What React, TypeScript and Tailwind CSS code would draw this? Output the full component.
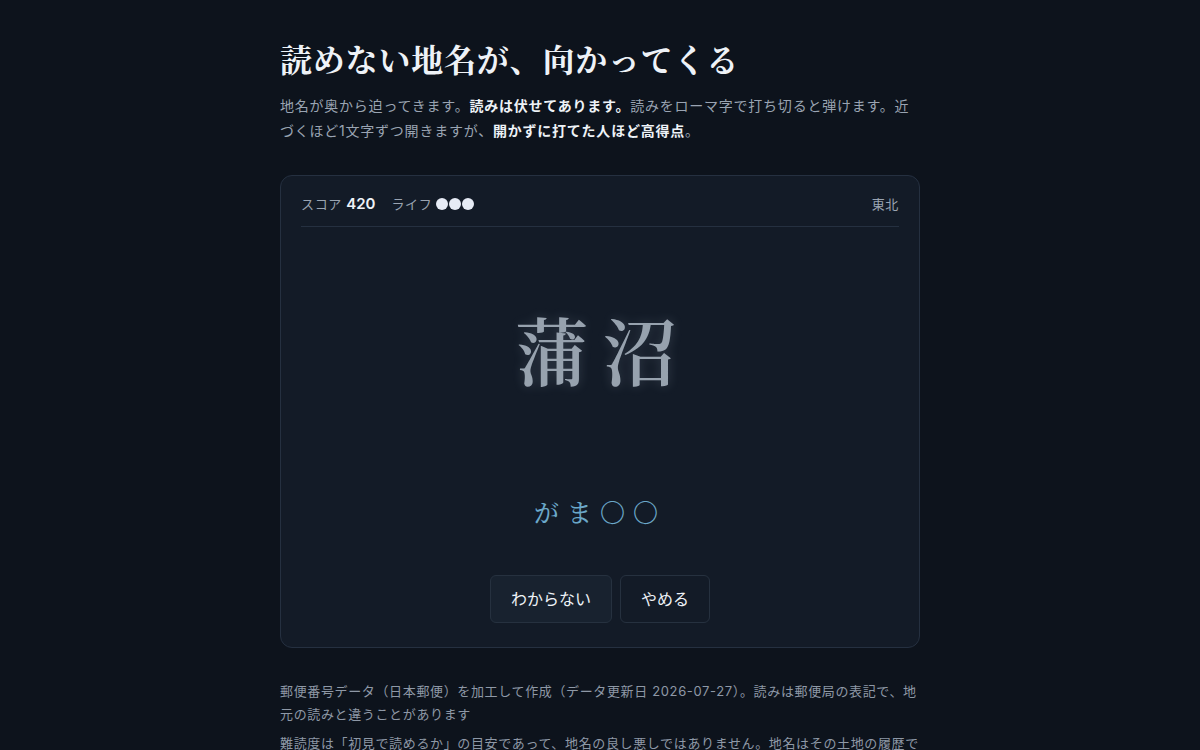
const sans = "font-['Inter','Noto_Sans_CJK_JP',sans-serif]";
const serif = "font-['Noto_Serif_CJK_JP','Noto_Serif_JP','IPAMincho','Liberation_Serif',serif]";

export default function App() {
  return (
    <div className={`min-h-screen bg-[#0d131c] text-[#e6ebf2] tracking-[0.04em] ${sans}`}>
      <main className="mx-auto w-[640px] pt-[37px] pb-16">
        <h1 className={`${serif} text-[32px] font-bold leading-[42px] tracking-[0.025em] text-[#eef2f7]`}>
          読めない地名が、向かってくる
        </h1>
        <p className="mt-[14px] text-[14px] leading-[25px] tracking-[0.055em] text-[#9aa4b2]">
          地名が奥から迫ってきます。<b className="font-bold text-[#eef2f7]">読みは伏せてあります。</b>
          読みをローマ字で打ち切ると弾けます。近づくほど1文字ずつ開きますが、
          <b className="font-bold text-[#eef2f7]">開かずに打てた人ほど高得点</b>。
        </p>

        {/* Game board */}
        <section className="mt-8 rounded-xl border border-[#253040] bg-[#131b27] px-5 pt-[18px] pb-6">
          <div className="flex items-center justify-between border-b border-[#253040] pb-3 text-[13px] leading-5">
            <div className="flex items-center gap-4 text-[#9aa4b2]">
              <span>
                スコア <span className="text-[15px] font-semibold tracking-normal text-[#eef2f7]">420</span>
              </span>
              <span className="flex items-center gap-1">
                ライフ
                <span className="flex gap-[1px]">
                  <span className="h-3 w-3 rounded-full bg-[#e6ebf5]" />
                  <span className="h-3 w-3 rounded-full bg-[#e6ebf5]" />
                  <span className="h-3 w-3 rounded-full bg-[#e6ebf5]" />
                </span>
              </span>
            </div>
            <span className="text-[#9aa4b2]">東北</span>
          </div>

          <div className="flex h-[250px] items-center justify-center pb-2">
            <span
              className={`${serif} pl-[6px] text-[74px] font-semibold leading-none tracking-[14px] text-[#97a2ae] [text-shadow:0_0_12px_rgba(190,205,225,0.2)]`}
            >
              蒲沼
            </span>
          </div>

          <div className={`${serif} mt-[18px] text-center text-[25px] font-medium leading-8 text-[#6ba8c9]`}>
            <span className="tracking-[8px]">がま〇〇</span>
          </div>

          <div className="mt-[48px] flex justify-center gap-2">
            <button className="rounded-md border border-[#26313f] bg-[#18222f] px-5 py-[11px] text-[16px] leading-6 tracking-normal text-[#eef2f7]">
              わからない
            </button>
            <button className="rounded-md border border-[#26313f] bg-transparent px-5 py-[11px] text-[16px] leading-6 tracking-normal text-[#eef2f7]">
              やめる
            </button>
          </div>
        </section>

        <footer className="mt-8 space-y-[6px] text-[13px] leading-[23px] text-[#8e98a6]">
          <p>
            郵便番号データ（日本郵便）を加工して作成（データ更新日 2026-07-27）。読みは郵便局の表記で、地元の読みと違うことがあります
          </p>
          <p>
            難読度は「初見で読めるか」の目安であって、地名の良し悪しではありません。地名はその土地の履歴です。
          </p>
        </footer>
      </main>
    </div>
  );
}
